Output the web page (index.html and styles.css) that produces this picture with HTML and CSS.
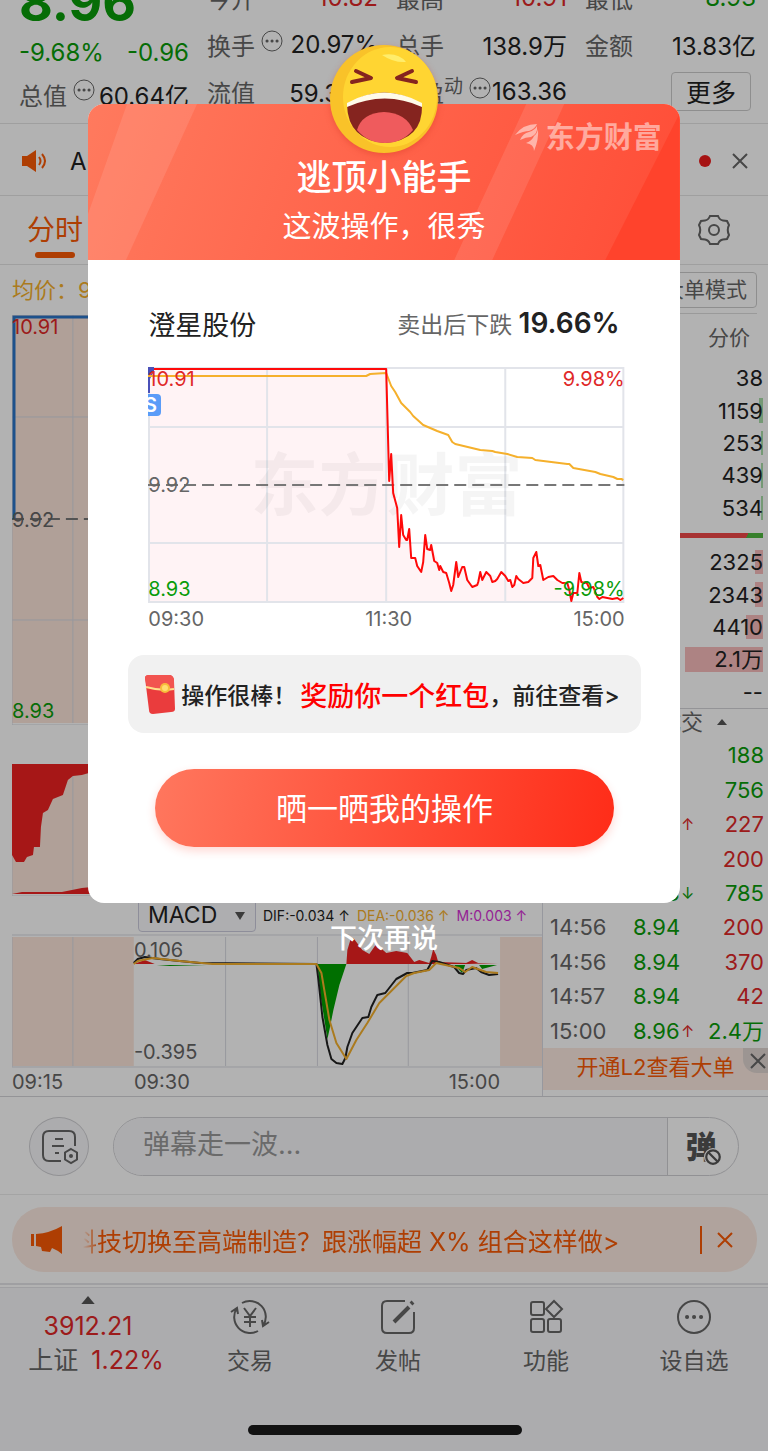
FILE: index.html
```html
<!DOCTYPE html>
<html lang="zh-CN">
<head>
  <meta charset="UTF-8">
  <meta name="viewport" content="width=device-width, initial-scale=1.0">
  <title>澄星股份</title>
  <link rel="stylesheet" href="styles.css">
</head>
<body>
  <div class="app">
    <!-- 行情概要 -->
    <header class="quote">
      <div class="quote-main">
        <div class="price green">8.96</div>
        <div class="change green"><span>-9.68%</span><span>-0.96</span></div>
        <div class="field"><span class="name">总值</span><svg class="more-dot" viewBox="0 0 22 22"><circle cx="11" cy="11" r="10"/><path d="M6 11h.1M11 11h.1M16 11h.1"/></svg><b>60.64亿</b></div>
      </div>
      <div class="quote-grid">
        <div class="field"><span class="name">今开</span><b class="red">10.82</b></div>
        <div class="field"><span class="name">最高</span><b class="red">10.91</b></div>
        <div class="field"><span class="name">最低</span><b class="green">8.93</b></div>
        <div class="field"><span class="name">换手</span><svg class="more-dot" viewBox="0 0 22 22"><circle cx="11" cy="11" r="10"/><path d="M6 11h.1M11 11h.1M16 11h.1"/></svg><b>20.97%</b></div>
        <div class="field"><span class="name">总手</span><b>138.9万</b></div>
        <div class="field"><span class="name">金额</span><b>13.83亿</b></div>
        <div class="field"><span class="name">流值</span><b>59.38亿</b></div>
        <div class="field"><span class="name">市盈<sup>动</sup></span><svg class="more-dot" viewBox="0 0 22 22"><circle cx="11" cy="11" r="10"/><path d="M6 11h.1M11 11h.1M16 11h.1"/></svg><b>163.36</b></div>
        <div class="field end"><button class="more-button">更多</button></div>
      </div>
    </header>

    <div class="news">
      <svg class="speaker" viewBox="0 0 26 22"><path d="M0 6h5l9-6v22l-9-6H0z"/><path class="wave" d="M17 7q3 4 0 8M20 4q6 7 0 14"/></svg>
      <span class="news-text">AI</span>
      <span class="news-dot"></span>
      <button class="icon-button" aria-label="关闭"><svg class="close" viewBox="0 0 16 16"><path d="M1 1l14 14M15 1L1 15"/></svg></button>
    </div>

    <nav class="tabs">
      <a href="#" class="tab active">分时</a>
      <button class="icon-button" aria-label="设置"><svg class="gear" viewBox="0 0 32 32"><path d="M12 2h8q1.500 4 5 4.500l4 .5 2 4q-2.500 5 0 10l-2 4-4 .5q-3.500.5-5 4.500h-8q-1.500-4-5-4.500L3 25l-2-4q2.500-5 0-10l2-4 4-.5q3.500-.5 5-4.500z"/><circle cx="16" cy="16" r="5"/></svg></button>
    </nav>

    <main class="board">
      <section class="charts">
        <div class="average">均价：9.92</div>
        <div class="chart chart-price">
          <svg viewBox="0 0 531 410" preserveAspectRatio="none">
            <rect class="pre" x="0" y="0" width="122" height="408"/>
            <path class="grid" d="M61 0v408M0 102h531M0 305h531M0 0v410h531"/>
            <path class="dash" d="M0 204h531"/>
            <path class="blue" d="M2 204V2h529"/>
          </svg>
          <span class="label top-left red">10.91</span>
          <span class="label mid-left">9.92</span>
          <span class="label bottom-left green">8.93</span>
        </div>
        <div class="chart chart-volume">
          <svg viewBox="0 0 531 132" preserveAspectRatio="none">
            <rect class="pre" x="0" y="0" width="122" height="130"/>
            <path class="grid" d="M61 0v130M0 0v132h531"/>
            <path class="fill-red" d="M0 0h90v8L77 9l-7 2-9 1-5 4-5 15-10 4-5 11-5 3-2 14-1 20h-6l-1 8-6 2-3 5H4l-4-7zM0 130l10-2h40l20-4 20-2v8z"/>
          </svg>
        </div>
        <div class="indicator">
          <label class="select-box"><select aria-label="指标"><option>MACD</option></select></label>
          <span class="dif">DIF:-0.034 ↑</span>
          <span class="dea">DEA:-0.036 ↑</span>
          <span class="m">M:0.003 ↑</span>
        </div>
        <div class="chart chart-macd">
          <svg viewBox="0 0 531 134" preserveAspectRatio="none">
            <rect class="pre" x="0" y="3" width="122" height="129"/>
            <rect class="pre" x="489" y="3" width="42" height="129"/>
            <path class="grid" d="M0 1h531M0 133h531M0 3v130M61 3v129M214 3v129M306 3v129M397 3v129"/>
            <path class="fill-green" d="M306 30l3 31 7 44 2-9 4-20 6-25 7-21zM145 31l13 1 37-1zM443 31l8 8 3-8zM468 31l3 4 15-4z"/>
            <path class="fill-red" d="M335 30l1-14 3-10 3-2 9 12 7 4 7-10 10 9 10-2 11 2 7 9 5-2 10 3 2-6 2-8 3 6 2 7 60 2zM122 30l11-4 10 4zM455 29l6-3 6 3z"/>
            <polyline class="line dark" points="122,29 126,25 133,23 148,25 188,29 305,30 307,46 311,83 316,111 320,125 325,129 331,130 334,124 336,113 341,99 351,84 357,83 360,73 366,61 374,59 385,45 396,39 401,39 416,36 421,27 428,28 443,33 448,39 452,40 455,36 465,34 470,38 478,41 487,40"/>
            <polyline class="line gold" points="122,30 126,27 141,24 168,27 201,30 305,30 310,39 318,86 325,109 335,125 345,106 356,89 368,69 386,51 395,42 403,39 418,36 425,29 448,34 454,38 461,33 475,38 487,39"/>
          </svg>
          <span class="label macd-high">0.106</span>
          <span class="label macd-low">-0.395</span>
        </div>
        <div class="times"><span>09:15</span><span>09:30</span><span>15:00</span></div>
      </section>

      <aside class="side">
        <div class="side-top"><button class="mode-button">大单模式</button></div>
        <div class="side-tabs"><a href="#">分价</a></div>
        <ul class="book sell">
          <li><span>38</span></li>
          <li><i style="width: 2%"></i><span>1159</span></li>
          <li><i style="width: 1%"></i><span>253</span></li>
          <li><i style="width: 1%"></i><span>439</span></li>
          <li><i style="width: 1%"></i><span>534</span></li>
        </ul>
        <div class="ratio"></div>
        <ul class="book buy">
          <li><i style="width: 4%"></i><span>2325</span></li>
          <li><i style="width: 4%"></i><span>2343</span></li>
          <li><i style="width: 8%"></i><span>4410</span></li>
          <li><i style="width: 37%"></i><span>2.1万</span></li>
          <li><span>--</span></li>
        </ul>
        <div class="deal-head">成交<svg class="triangle" viewBox="0 0 10 6"><path d="M5 0l5 6H0z"/></svg></div>
        <table class="deals">
          <tr><td></td><td></td><td></td><td class="green">188</td></tr>
          <tr><td></td><td></td><td></td><td class="green">756</td></tr>
          <tr><td></td><td></td><td class="arrow red">↑</td><td class="red">227</td></tr>
          <tr><td></td><td></td><td></td><td class="red">200</td></tr>
          <tr><td></td><td class="green">8.93</td><td class="arrow green">↓</td><td class="green">785</td></tr>
          <tr><td>14:56</td><td class="green">8.94</td><td></td><td class="red">200</td></tr>
          <tr><td>14:56</td><td class="green">8.94</td><td></td><td class="red">370</td></tr>
          <tr><td>14:57</td><td class="green">8.94</td><td></td><td class="red">42</td></tr>
          <tr><td>15:00</td><td class="green">8.96</td><td class="arrow red">↑</td><td class="green">2.4万</td></tr>
        </table>
        <div class="level2">
          <a href="#">开通L2查看大单</a>
          <button class="level2-close" aria-label="关闭"><svg class="close" viewBox="0 0 16 16"><path d="M1 1l14 14M15 1L1 15"/></svg></button>
        </div>
      </aside>
    </main>

    <!-- 弹幕输入 -->
    <div class="comment">
      <button class="round-button" aria-label="弹幕设置">
        <svg viewBox="0 0 38 36"><path d="M34 17V8q0-6-6-6H8Q2 2 2 8v18q0 6 6 6h12"/><path d="M14 10h8M11 17h12M14 24h4"/><path d="M30 20l6 3.500v7L30 34l-6-3.500v-7z"/><circle class="solid" cx="30" cy="27" r="2"/></svg>
      </button>
      <div class="comment-box">
        <input type="text" placeholder="弹幕走一波..." aria-label="弹幕">
        <button class="barrage" aria-label="弹幕开关">弹<svg viewBox="0 0 16 16"><circle cx="8" cy="8" r="6"/><path d="M4 4l8 8"/></svg></button>
      </div>
    </div>

    <div class="promo">
      <div class="promo-pill">
        <svg class="horn" viewBox="0 0 32 28"><path d="M0 8h3v12H0zM5 8q14-1 26-8v28q-5-4-10-6l-2 4-8-1-1-4-5-1z"/></svg>
        <a href="#" class="promo-text"><span>科技切换至高端制造？跟涨幅超 X% 组合这样做&gt;</span></a>
        <button class="promo-close" aria-label="关闭"><svg class="close" viewBox="0 0 16 16"><path d="M1 1l14 14M15 1L1 15"/></svg></button>
      </div>
    </div>

    <nav class="bottom">
      <a href="#" class="index">
        <svg class="triangle" viewBox="0 0 10 6"><path d="M5 0l5 6H0z"/></svg>
        <span class="red">3912.21</span>
        <span class="index-name">上证 <em class="red">1.22%</em></span>
      </a>
      <a href="#"><svg viewBox="0 0 40 36"><path d="M12 4a16 16 0 0 1 21 23M28 32A16 16 0 0 1 7 9M1 13l6-4 1 6M39 23l-6 4-1-6M14 9l6 8 6-8M20 17v11M14 18h12M14 23h12"/></svg><span>交易</span></a>
      <a href="#"><svg viewBox="0 0 40 36"><path d="M27 2H9Q4 2 4 7v22q0 5 5 5h22q5 0 5-5V13"/><path class="pen" d="M16 23L31 8M33 5l2-2"/></svg><span>发帖</span></a>
      <a href="#"><svg viewBox="0 0 40 36"><rect x="5" y="3" width="13" height="13" rx="2"/><rect x="5" y="20" width="13" height="13" rx="2"/><rect x="22" y="20" width="13" height="13" rx="2"/><path d="M28 2l8 8-8 8-8-8z"/></svg><span>功能</span></a>
      <a href="#"><svg viewBox="0 0 40 36"><circle cx="20" cy="18" r="16"/><path class="dots" d="M13 18h.1M20 18h.1M27 18h.1"/></svg><span>设自选</span></a>
    </nav>
    <div class="home-bar"></div>

    <!-- 弹窗 -->
    <div class="overlay">
      <div class="dialog" role="dialog" aria-labelledby="dialog-title">
        <svg class="emoji" viewBox="0 0 110 110">
          <circle cx="55" cy="55" r="54" fill="#f9c229"/>
          <ellipse cx="61" cy="53" rx="47" ry="50" fill="#ffd532"/>
          <path d="M53 11q16-3 24 7-12 1-24-7z" fill="#ffed6b"/>
          <path d="M27 27l15 7-19 4M83 27l-15 7 19 4" fill="none" stroke="#85241f" stroke-width="4" stroke-linecap="round" stroke-linejoin="round"/>
          <path d="M18 61q37-25 75 0 1 35-37 38-37-3-38-38z" fill="#85241f"/>
          <path d="M28 86q5-17 27-18 22 1 29 18-11 13-28 13T28 86z" fill="#ef5b5d"/>
          <path d="M18 63v-4q37-21 75 0v4q-37-17-75 0z" fill="#fffbea"/>
        </svg>
        <div class="dialog-head">
          <svg class="stripes" viewBox="0 0 591 156" preserveAspectRatio="none">
            <path d="M39 0h70L38 156H0V110z"/><path d="M438 0h38L404 156h-38z"/><path class="deep" d="M591 10v146h-74z"/>
          </svg>
          <div class="brand"><svg viewBox="0 0 24 28"><path d="M0 11Q8 0 22 0q-2 5-8 7-5 0-14 4zM5 16q3-7 9-8 6-2 8-6 1 8-6 11-5 0-11 3zM11 19q6-2 8-7 3-2 4-7 1 10-4 22 0-7-8-8z"/></svg>东方财富</div>
          <h1 id="dialog-title">逃顶小能手</h1>
          <p>这波操作，很秀</p>
        </div>
        <div class="dialog-body">
          <div class="stock">
            <h2>澄星股份</h2>
            <p>卖出后下跌 <strong>19.66%</strong></p>
          </div>
          <div class="chart chart-trade">
            <svg viewBox="0 0 476 236" preserveAspectRatio="none">
              <path class="area" d="M0 1H238L241 114 243 87 245 126 249 141 251 180 253 148 255 168 258 173 261 162 263 191 273 205 277 168 283 178 294 203 303 224 308 195 315 199 324 220 338 205 354 212 364 218 380 214 388 185 396 213 420 216 425 234V236H0z"/>
              <path class="grid" d="M119 0v236M238 0v236M357 0v236M0 60h476M0 176h476M1 1h474v234H1z"/>
            </svg>
            <span class="watermark">东方财富</span>
            <svg viewBox="0 0 476 236" preserveAspectRatio="none">
              <path class="dash" d="M0 118h476"/>
              <path class="mark" d="M0 0h6v4L2 12v14H0z"/>
              <path class="mark-light" d="M0 27h9q4 0 4 4v14q0 4-4 4H0z"/>
              <text class="mark-text" x="-4" y="45">S</text>
              <polyline class="line gold" points="0,9 218,9 222,7 238,6 243,19 247,25 253,36 262,45 265,49 275,58 289,64 300,68 304,75 307,77 332,83 344,84 347,85 359,87 369,90 384,91 387,93 419,97 421,97 425,101 447,105 452,107 465,110 469,112 473,112 475,113"/>
              <polyline class="line bright" points="6,2 238,2 241,114 243,87 245,126 249,141 251,180 253,148 255,168 258,173 259,173 261,162 263,191 267,191 269,199 273,205 275,195 277,168 279,182 282,183 283,178 286,194 289,196 291,203 292,199 295,205 298,206 301,216 303,224 305,218 308,195 310,210 314,200 316,200 319,213 324,220 329,218 330,215 332,205 334,213 338,205 342,209 344,215 347,214 349,212 353,205 357,209 360,214 362,213 364,220 366,218 368,209 370,212 375,216 380,215 384,211 385,191 388,185 390,199 392,198 395,213 400,210 405,209 409,213 414,216 419,216 421,223 423,234 425,226 429,226 431,206 433,215 436,216 438,215 441,221 445,220 449,230 451,232 454,230 459,231 464,232 469,231 472,233 475,231"/>
            </svg>
            <span class="label top-left red">10.91</span>
            <span class="label top-right red">9.98%</span>
            <span class="label mid-left">9.92</span>
            <span class="label bottom-left green">8.93</span>
            <span class="label bottom-right green">-9.98%</span>
          </div>
          <div class="trade-times"><span>09:30</span><span>11:30</span><span>15:00</span></div>
          <a href="#" class="reward">
            <svg viewBox="0 0 30 40"><path d="M4 1h21q4 1 4 6l1 28q0 3-4 3l-18 2q-4 0-4-4L0 4q0-3 4-3z" fill="#ea3c3d"/><path d="M4 1h21q4 1 4 6v9q-14 3-27-2L0 4q0-3 4-3z" fill="#f25450"/><path d="M1 13q14 4 28 2" fill="none" stroke="#ffdf8a" stroke-width="2"/><circle cx="20" cy="14" r="5" fill="#f7bd3b"/><circle cx="20" cy="14" r="3" fill="#ffdf70"/></svg>
            <span>操作很棒！</span><strong>奖励你一个红包</strong><span>，前往查看&gt;</span>
          </a>
          <button class="share">晒一晒我的操作</button>
        </div>
      </div>
      <button class="later">下次再说</button>
    </div>
  </div>
</body>
</html>
```
FILE: styles.css
```css
* {
  box-sizing: border-box;
}
body {
  margin: 0;
  font-family: Inter, "Noto Sans CJK SC", sans-serif;
  font-size: 24px;
  color: #222;
  background: #fff;
}
button, input, select {
  font-family: inherit;
  margin: 0;
  padding: 0;
  border: none;
  background: none;
  color: inherit;
}
a {
  color: inherit;
  text-decoration: none;
}
svg {
  display: block;
  fill: none;
  stroke: #666;
  stroke-width: 2;
}
h1, h2, p, ul {
  margin: 0;
  padding: 0;
  font-weight: normal;
}
.app {
  position: relative;
  min-height: 100vh;
  display: flex;
  flex-direction: column;
  overflow: hidden;
}
.green {
  color: #0a9c0a;
}
.red {
  color: #e02828;
}

/* 行情概要 */
.quote {
  display: flex;
  gap: 18px;
  margin-top: -26px;
  padding: 0 12px 8px 19px;
  border-bottom: 1px solid #e4e4e4;
}
.quote-main {
  flex: 0 0 170px;
}
.quote-main .field {
  height: 40px;
}
.price {
  font-size: 52px;
  font-weight: 700;
  line-height: 58px;
}
.change {
  display: flex;
  justify-content: space-between;
  line-height: 42px;
}
.quote-grid {
  flex: 1;
  display: grid;
  grid-template-columns: repeat(3, 1fr);
  grid-auto-rows: 47px;
  column-gap: 18px;
}
.field {
  display: flex;
  align-items: center;
  white-space: nowrap;
}
.field b {
  margin-left: auto;
  font-weight: 400;
}
.field.end {
  justify-content: flex-end;
}
.name {
  color: #666;
}
.name sup {
  font-size: 19px;
  line-height: 0;
}
.more-dot {
  width: 22px;
  height: 22px;
  margin: 0 0 8px 6px;
  stroke-width: 1;
  flex: none;
}
.more-dot path {
  stroke-width: 3;
  stroke-linecap: round;
}
.more-button {
  width: 80px;
  height: 39px;
  margin: 0 5px 0 0;
  padding-bottom: 2px;
  border: 1px solid #ccc;
  border-radius: 4px;
  font-size: 25px;
}
.icon-button {
  cursor: pointer;
}

/* 资讯条 */
.news {
  display: flex;
  align-items: center;
  height: 69px;
  margin-top: 3px;
  padding: 0 20px 0 22px;
  border-bottom: 1px solid #e4e4e4;
}
.speaker {
  width: 26px;
  height: 22px;
  fill: #fa5a05;
  stroke: none;
}
.speaker .wave {
  fill: none;
  stroke: #fa5a05;
  stroke-width: 2;
}
.news-text {
  flex: 1;
  margin-left: 22px;
}
.news-dot {
  width: 12px;
  height: 12px;
  margin-right: 21px;
  border-radius: 50%;
  background: #ee1c1c;
}
.close {
  width: 16px;
  height: 16px;
}
.tabs {
  display: flex;
  align-items: center;
  justify-content: space-between;
  height: 69px;
  padding: 0 38px 0 27px;
  border-bottom: 1px solid #e4e4e4;
}
.tab {
  position: relative;
  font-size: 28px;
  line-height: 56px;
}
.tab.active {
  color: #fa5a05;
}
.tab.active::after {
  content: '';
  position: absolute;
  left: 8px;
  right: 8px;
  bottom: 0;
  height: 6px;
  border-radius: 3px;
  background: #fa5a05;
}
.gear {
  width: 32px;
  height: 32px;
}

/* 图表 */
.board {
  display: flex;
  border-bottom: 1px solid #d4d4d8;
}
.charts {
  flex: 1;
  min-width: 0;
  padding-left: 12px;
}
.average {
  font-size: 22px;
  line-height: 50px;
  color: #f5b02c;
}
.chart {
  position: relative;
}
.chart > svg {
  width: 100%;
  height: 100%;
}
.chart-price {
  height: 410px;
}
.chart-volume {
  height: 132px;
  margin-top: 39px;
}
.chart-macd {
  height: 134px;
}
.pre {
  fill: #fce5da;
  stroke: none;
}
.grid {
  stroke: #d8dae2;
  stroke-width: 1;
}
.dash {
  stroke: #777;
  stroke-dasharray: 12 6;
}
.blue {
  stroke: #2a74c8;
  stroke-width: 3;
}
.fill-red {
  fill: #ee2222;
  stroke: none;
}
.fill-green {
  fill: #00a000;
  stroke: none;
}
.line {
  stroke-linejoin: round;
}
.line.dark {
  stroke: #222;
}
.line.gold {
  stroke: #f5b02c;
}
.line.bright {
  stroke: #ff0a0a;
}
.label {
  position: absolute;
  left: 0;
  font-size: 20px;
  line-height: 24px;
}
.label:not(.red):not(.green) {
  color: #666;
}
.top-left {
  top: 0;
}
.top-right {
  top: 0;
  left: auto;
  right: 0;
}
.mid-left {
  top: 50%;
  margin-top: -12px;
}
.bottom-left {
  bottom: 2px;
}
.bottom-right {
  bottom: 2px;
  left: auto;
  right: 0;
}
.macd-high {
  top: 4px;
  left: 23%;
}
.macd-low {
  bottom: 4px;
  left: 23%;
}
.indicator {
  display: flex;
  align-items: center;
  gap: 7px;
  height: 38px;
  padding-left: 126px;
  font-size: 14px;
  white-space: nowrap;
}
.select-box {
  position: relative;
  width: 118px;
  height: 34px;
  border: 1px solid #ccd;
  border-radius: 4px;
  background: #fafafc;
}
.select-box::after {
  content: '';
  position: absolute;
  right: 10px;
  top: 13px;
  border: 5px solid transparent;
  border-top: 8px solid #555;
  border-bottom: none;
}
.select-box select {
  width: 100%;
  height: 100%;
  padding-left: 9px;
  font-size: 23px;
  appearance: none;
}
.dea {
  color: #f5b02c;
}
.m {
  color: #d430d4;
}
.times {
  display: grid;
  grid-template-columns: 122px 1fr auto;
  padding-right: 42px;
  font-size: 20px;
  line-height: 28px;
  color: #666;
}

/* 盘口 */
.side {
  flex: 0 0 226px;
  border-left: 1px solid #d8dae2;
}
.side-top {
  display: flex;
  justify-content: flex-end;
  margin: 0 11px 0 8px;
  padding: 7px 0 5px;
  border-bottom: 1px solid #ddd;
}
.mode-button {
  height: 36px;
  padding: 0 9px;
  border: 1px solid #ccc;
  border-radius: 4px;
  font-size: 21px;
  line-height: 32px;
  color: #666;
}
.side-tabs {
  padding-right: 18px;
  font-size: 21px;
  line-height: 48px;
  text-align: right;
  color: #666;
}
.book {
  display: flex;
  flex-direction: column;
  height: 162px;
  padding: 0 5px 0 8px;
  list-style: none;
  font-size: 22px;
  line-height: 28px;
  text-align: right;
}
.book li {
  position: relative;
  flex: 1;
  display: flex;
  align-items: center;
  justify-content: flex-end;
}
.book i {
  position: absolute;
  right: 0;
  top: 4px;
  bottom: 4px;
  background: #f8bcbc;
}
.book.sell i {
  background: #a8dca8;
}
.book span {
  position: relative;
}
.ratio {
  height: 5px;
  margin: 9px 5px 8px 8px;
  background: linear-gradient(120deg, #f04848 92%, #50b840 92%);
}
.deal-head {
  display: flex;
  align-items: center;
  gap: 14px;
  height: 30px;
  padding: 0 0 4px 116px;
  border-top: 1px solid #d4d4d8;
  font-size: 22px;
  line-height: 24px;
  color: #666;
}
.triangle {
  width: 10px;
  height: 6px;
  fill: #555;
  stroke: none;
}
.deals {
  width: 100%;
  height: 310px;
  table-layout: fixed;
  border-collapse: collapse;
  font-size: 22px;
  line-height: 24px;
  color: #666;
}
.deals td {
  padding: 0;
  white-space: nowrap;
}
.deals td:first-child {
  width: 90px;
  padding-left: 7px;
}
.deals td:nth-child(2) {
  width: 48px;
}
.deals td:nth-child(3) {
  width: 14px;
}
.deals td:last-child {
  padding-right: 4px;
  text-align: right;
}
.deals .green {
  color: #0a9c0a;
}
.deals .red {
  color: #e02828;
}
.deals .arrow {
  font-size: 16px;
}
.level2 {
  position: relative;
  height: 42px;
  margin-bottom: 5px;
  background: #fdeae1;
  font-size: 22px;
  line-height: 38px;
  text-align: center;
  color: #fa5a05;
}
.level2-close {
  position: absolute;
  right: 0;
  top: 0;
  width: 25px;
  height: 25px;
  padding-left: 7px;
  border-bottom-left-radius: 14px;
  background: #e0d6d2;
}

/* 弹幕 */
.comment {
  display: flex;
  gap: 24px;
  height: 98px;
  padding: 20px 29px 0;
  border-bottom: 1px solid #ebebeb;
}
.round-button {
  width: 60px;
  height: 59px;
  padding-left: 11px;
  border: 1px solid #d0d0d4;
  border-radius: 50%;
  background: #f7f7fa;
}
.round-button svg {
  width: 38px;
  height: 36px;
}
.round-button .solid {
  fill: #666;
  stroke: none;
}
.comment-box {
  flex: 1;
  display: flex;
  height: 59px;
  border: 1px solid #d0d0d4;
  border-radius: 30px;
  overflow: hidden;
}
.comment-box input {
  flex: 1;
  min-width: 0;
  padding: 0 0 5px 29px;
  font-size: 27px;
  background: #f7f7fa;
}
.comment-box input::placeholder {
  color: #999;
}
.barrage {
  position: relative;
  width: 71px;
  padding: 0 4px 4px 0;
  border-left: 1px solid #d0d0d4;
  font-size: 31px;
  font-weight: 900;
  color: #555;
}
.barrage svg {
  position: absolute;
  right: 16px;
  bottom: 9px;
  width: 18px;
  height: 18px;
  border-radius: 50%;
  background: #fff;
  stroke: #555;
}

/* 推广 */
.promo {
  padding: 12px 11px 11px 12px;
  border-bottom: 2px solid #e4e4e8;
}
.promo-pill {
  display: flex;
  align-items: center;
  height: 65px;
  padding: 0 24px 0 19px;
  border-radius: 32px;
  background: #fdeae1;
  color: #fa5a05;
}
.horn {
  flex: none;
  width: 32px;
  height: 28px;
  fill: #fa5a05;
  stroke: none;
}
.promo-text {
  flex: 1;
  margin-left: 20px;
  overflow: hidden;
  font-size: 25px;
  white-space: nowrap;
  -webkit-mask-image: linear-gradient(90deg, transparent, #000 16px);
  mask-image: linear-gradient(90deg, transparent, #000 16px);
}
.promo-text span {
  display: block;
  margin-left: -11px;
}
.promo-close {
  padding: 6px 0 6px 15px;
  border-left: 2px solid #fa5a05;
}
.promo-close .close {
  stroke: #fa5a05;
}

/* 底部导航 */
.bottom {
  flex: 1;
  display: flex;
  min-height: 163px;
  margin-top: 2px;
  background: #f7f7fa;
  border-top: 1px solid #e4e4e8;
}
.bottom a {
  flex: 1;
  display: flex;
  flex-direction: column;
  align-items: center;
  gap: 10px;
  padding-top: 11px;
  font-size: 23px;
  line-height: 32px;
  color: #666;
}
.bottom svg {
  width: 40px;
  height: 36px;
}
.bottom .pen {
  stroke-width: 4;
}
.bottom .dots {
  stroke-width: 4;
  stroke-linecap: round;
}
.bottom .index {
  flex: 0 0 176px;
  gap: 0;
  padding-top: 8px;
  font-size: 25px;
  line-height: 34px;
}
.bottom .triangle {
  width: 14px;
  height: 8px;
  margin-bottom: 5px;
}
.index-name {
  padding-left: 16px;
  white-space: nowrap;
}
.index-name em {
  margin-left: 6px;
  font-style: normal;
}
.home-bar {
  position: absolute;
  left: 50%;
  bottom: 16px;
  width: 274px;
  height: 10px;
  margin-left: -136px;
  border-radius: 5px;
  background: #1a1a1a;
}

/* 弹窗 */
.overlay {
  position: absolute;
  inset: 0;
  display: flex;
  flex-direction: column;
  align-items: center;
  padding-top: 104px;
  background: rgba(0, 0, 0, 0.3);
}
.dialog {
  position: relative;
  width: 77%;
  border-radius: 16px;
  background: #fff;
}
.emoji {
  position: absolute;
  left: 50%;
  top: -60px;
  z-index: 1;
  width: 110px;
  height: 110px;
  margin-left: -55px;
  stroke: none;
  filter: drop-shadow(0 2px 3px rgba(200, 40, 20, 0.3));
}
.dialog-head {
  position: relative;
  height: 156px;
  padding-top: 48px;
  border-radius: 16px 16px 0 0;
  overflow: hidden;
  text-align: center;
  color: #fff;
  background: linear-gradient(110deg, #ff7a5e, #ff4c36);
}
.stripes {
  position: absolute;
  inset: 0;
  width: 100%;
  height: 100%;
  fill: rgba(255, 255, 255, 0.1);
  stroke: none;
}
.stripes .deep {
  fill: #ff432c;
}
.brand {
  position: absolute;
  right: 18px;
  top: 17px;
  display: flex;
  align-items: center;
  gap: 7px;
  font-size: 29px;
  font-weight: 700;
  line-height: 34px;
  color: rgba(255, 255, 255, 0.5);
}
.brand svg {
  width: 24px;
  height: 28px;
  fill: rgba(255, 255, 255, 0.5);
  stroke: none;
}
.dialog-head h1 {
  position: relative;
  font-size: 35px;
  font-weight: 500;
  line-height: 50px;
}
.dialog-head p {
  position: relative;
  font-size: 29px;
  line-height: 50px;
}
.dialog-body {
  padding: 38px 39px 56px 40px;
}
.stock {
  display: flex;
  align-items: center;
  justify-content: space-between;
  height: 50px;
  margin: 0 21px 19px 20px;
}
.stock h2 {
  font-size: 27px;
}
.stock p {
  font-size: 23px;
  color: #666;
}
.stock strong {
  font-size: 28px;
  font-weight: 600;
  color: #222;
}
.chart-trade {
  height: 236px;
  margin: 0 16px 0 20px;
  overflow: hidden;
}
.chart-trade > svg {
  position: absolute;
  inset: 0;
}
.chart-trade .grid {
  stroke: #e2e4ea;
  stroke-width: 2;
}
.chart-trade .area {
  fill: #fff3f5;
  stroke: none;
}
.mark {
  fill: #4a50b8;
  stroke: none;
}
.mark-light {
  fill: #5a9cf8;
  stroke: none;
}
.mark-text {
  fill: #fff;
  stroke: none;
  font-size: 20px;
  font-weight: 600;
}
.watermark {
  position: absolute;
  left: 0;
  right: 0;
  top: 68px;
  font-size: 68px;
  font-weight: 700;
  line-height: 100px;
  text-align: center;
  color: rgba(0, 0, 0, 0.04);
}
.trade-times {
  display: flex;
  justify-content: space-between;
  margin: 0 16px 0 20px;
  font-size: 20px;
  line-height: 32px;
  color: #666;
}
.reward {
  display: flex;
  align-items: center;
  height: 78px;
  margin-top: 20px;
  padding: 0 17px;
  border-radius: 16px;
  background: #f1f1f1;
  font-size: 23px;
  font-weight: 500;
  white-space: nowrap;
}
.reward svg {
  flex: none;
  width: 30px;
  height: 40px;
  margin-right: 6px;
  stroke: none;
}
.reward strong {
  margin-left: 4px;
  font-size: 27px;
  font-weight: 500;
  color: #ff0000;
}
.share {
  display: block;
  width: calc(100% - 53px);
  height: 78px;
  margin: 36px auto 0;
  padding-bottom: 4px;
  border-radius: 39px;
  background: linear-gradient(100deg, #ff775e, #ff2c18);
  box-shadow: 0 4px 10px rgba(255, 60, 40, 0.2);
  font-size: 31px;
  color: #fff;
}
.later {
  margin-top: 16px;
  font-size: 27px;
  font-weight: 500;
  line-height: 40px;
  color: #fff;
}
```
